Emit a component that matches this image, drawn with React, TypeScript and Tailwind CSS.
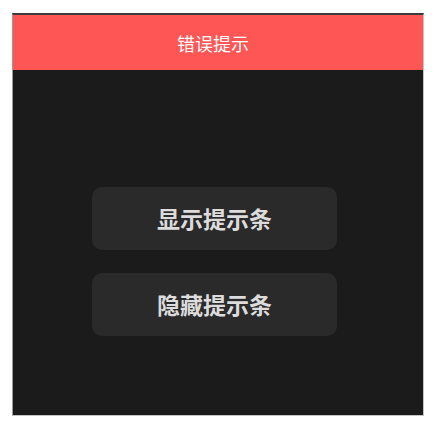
import React from "react";

export default function App() {
  return (
    <div className="w-[438px] h-[430px] bg-white pt-[13px] pl-[12px]" style={{ fontFamily: '"Noto Sans CJK SC", "Noto Sans", sans-serif' }}>
      <div className="w-[412px] h-[403px] flex flex-col border-l border-[#9a9a9a] border-r border-r-[#c4c4c4] border-b border-b-[#c4c4c4] border-t-2 border-t-[#3c3c3c] bg-[#1b1b1b]">
        <div className="h-[55px] bg-[#fe5555] flex items-center justify-center pr-[10px] text-white text-[18px] leading-none">
          错误提示
        </div>
        <div className="flex flex-col pl-[79px] pt-[117px] gap-[23px]">
          <button className="w-[245px] h-[63px] rounded-[10px] bg-[#2a2a2a] text-[#dcdcdc] text-[23px] font-bold flex items-center justify-center pb-[1px]">
            显示提示条
          </button>
          <button className="w-[245px] h-[63px] rounded-[10px] bg-[#2a2a2a] text-[#dcdcdc] text-[23px] font-bold flex items-center justify-center pb-[1px]">
            隐藏提示条
          </button>
        </div>
      </div>
    </div>
  );
}
